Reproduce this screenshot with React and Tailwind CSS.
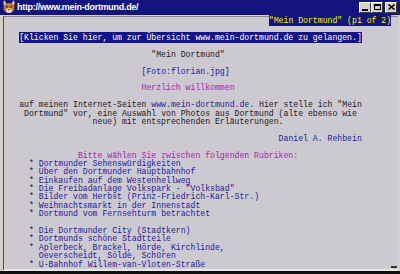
const mono = { fontFamily: '"Liberation Mono", "DejaVu Sans Mono", monospace' };

const Row = ({ indent = 0, children }) => (
  <div className="h-[8.4px] leading-[8.4px] whitespace-pre" style={{ paddingLeft: `${indent}ch` }}>
    {children || "\u00a0"}
  </div>
);

const Link = ({ children }) => <span className="text-[#22229a]">{children}</span>;
const Head = ({ children }) => <span className="text-[#a028a8]">{children}</span>;

const Item = ({ children, bullet = true }) => (
  <Row indent={5}>
    <span className="text-[#222222]">{bullet ? "* " : "  "}</span>
    <Link>{children}</Link>
  </Row>
);

const FoxIcon = () => (
  <svg width="14" height="14" viewBox="0 0 14 14">
    <polygon points="1,1 5,4 2,7" fill="#d89048" />
    <polygon points="13,1 9,4 12,7" fill="#d89048" />
    <polygon points="2,0 4,3 2,5" fill="#f0d8a0" />
    <polygon points="12,0 10,3 12,5" fill="#f0d8a0" />
    <ellipse cx="7" cy="8" rx="5.5" ry="5" fill="#c07838" />
    <ellipse cx="7" cy="10.5" rx="3" ry="2.5" fill="#f0dcb0" />
    <rect x="4" y="6" width="1.5" height="1.5" fill="#302010" />
    <rect x="8.5" y="6" width="1.5" height="1.5" fill="#302010" />
    <rect x="6.3" y="9" width="1.4" height="1.2" fill="#302010" />
  </svg>
);

const WinButton = ({ children, className = "" }) => (
  <div
    className={`w-[12px] h-[11px] bg-[#d4d0c8] border border-t-white border-l-white border-r-[#404040] border-b-[#404040] flex items-center justify-center ${className}`}
  >
    {children}
  </div>
);

export default function App() {
  return (
    <div className="w-[400px] h-[274px] bg-[#d0ccd4] flex flex-col overflow-hidden">
      {/* title bar */}
      <div className="h-[16px] bg-[#14147e] flex items-center pl-[2px] pr-[3px]">
        <FoxIcon />
        <span
          className="ml-[1px] text-white font-bold text-[9px] tracking-[-0.3px] leading-none"
          style={{ fontFamily: '"Liberation Sans", Arial, sans-serif' }}
        >
          http://www.mein-dortmund.de/
        </span>
        <div className="ml-auto flex items-center">
          <WinButton>
            <div className="w-[6px] h-[2px] bg-black mt-[5px]" />
          </WinButton>
          <WinButton>
            <div className="w-[7px] h-[6px] border border-black border-t-2" />
          </WinButton>
          <WinButton className="ml-[2px]">
            <svg width="7" height="6" viewBox="0 0 7 6">
              <path d="M0.5 0.5 L6.5 5.5 M6.5 0.5 L0.5 5.5" stroke="black" strokeWidth="1.5" />
            </svg>
          </WinButton>
        </div>
      </div>

      {/* frame */}
      <div className="flex-1 bg-[#d4d0c8] pt-[1px] pl-[3px] pr-[2px] border-b-[3px] border-b-[#101010]">
        <div
          className="relative h-full bg-[#cdc9d1] border-l border-l-[#505050] border-t border-t-[#8a8690] border-b-2 border-b-[#e8e6ea] pl-[0.5px] pt-[0.5px] text-[8.17px] text-[#202020]"
          style={mono}
        >
          <Row indent={54}>
            <span className="bg-[#14147e] text-[#f4f000] py-[1px]">"Mein Dortmund" (p1 of 2)</span>
          </Row>
          <Row />
          <Row indent={3}>
            <span className="bg-[#14148a] text-white py-[1px]">
              [Klicken Sie hier, um zur Übersicht www.mein-dortmund.de zu gelangen.]
            </span>
          </Row>
          <Row />
          <Row indent={30}>"Mein Dortmund"</Row>
          <Row />
          <Row indent={28}>
            <Link>[Foto:florian.jpg]</Link>
          </Row>
          <Row />
          <Row indent={28}>
            <Head>Herzlich willkommen</Head>
          </Row>
          <Row />
          <Row indent={3}>
            auf meinen Internet-Seiten <Link>www.mein-dortmund.de</Link>. Hier stelle ich "Mein
          </Row>
          <Row indent={4}>Dortmund" vor, eine Auswahl von Photos aus Dortmund (alte ebenso wie</Row>
          <Row indent={18}>neue) mit entsprechenden Erläuterungen.</Row>
          <Row />
          <Row indent={56}>
            <Link>Daniel A. Rehbein</Link>
          </Row>
          <Row />
          <Row indent={15}>
            <Head>Bitte wählen Sie zwischen folgenden Rubriken:</Head>
          </Row>
          <Item>Dortmunder Sehenswürdigkeiten</Item>
          <Item>Über den Dortmunder Hauptbahnhof</Item>
          <Item>Einkaufen auf dem Westenhellweg</Item>
          <Item>Die Freibadanlage Volkspark - "Volksbad"</Item>
          <Item>Bilder vom Herbst (Prinz-Friedrich-Karl-Str.)</Item>
          <Item>Weihnachtsmarkt in der Innenstadt</Item>
          <Item>Dortmund vom Fernsehturm betrachtet</Item>
          <Row />
          <Item>Die Dortmunder City (Stadtkern)</Item>
          <Item>Dortmunds schöne Stadtteile</Item>
          <Item>Aplerbeck, Brackel, Hörde, Kirchlinde,</Item>
          <Item bullet={false}>Oeverscheidt, Sölde, Schüren</Item>
          <Item>U-Bahnhof Willem-van-Vloten-Straße</Item>

          {/* cursor mark */}
          <div className="absolute right-[1px] bottom-[1px] w-[6px] h-[2px] bg-[#303030]" />
        </div>
      </div>
    </div>
  );
}
